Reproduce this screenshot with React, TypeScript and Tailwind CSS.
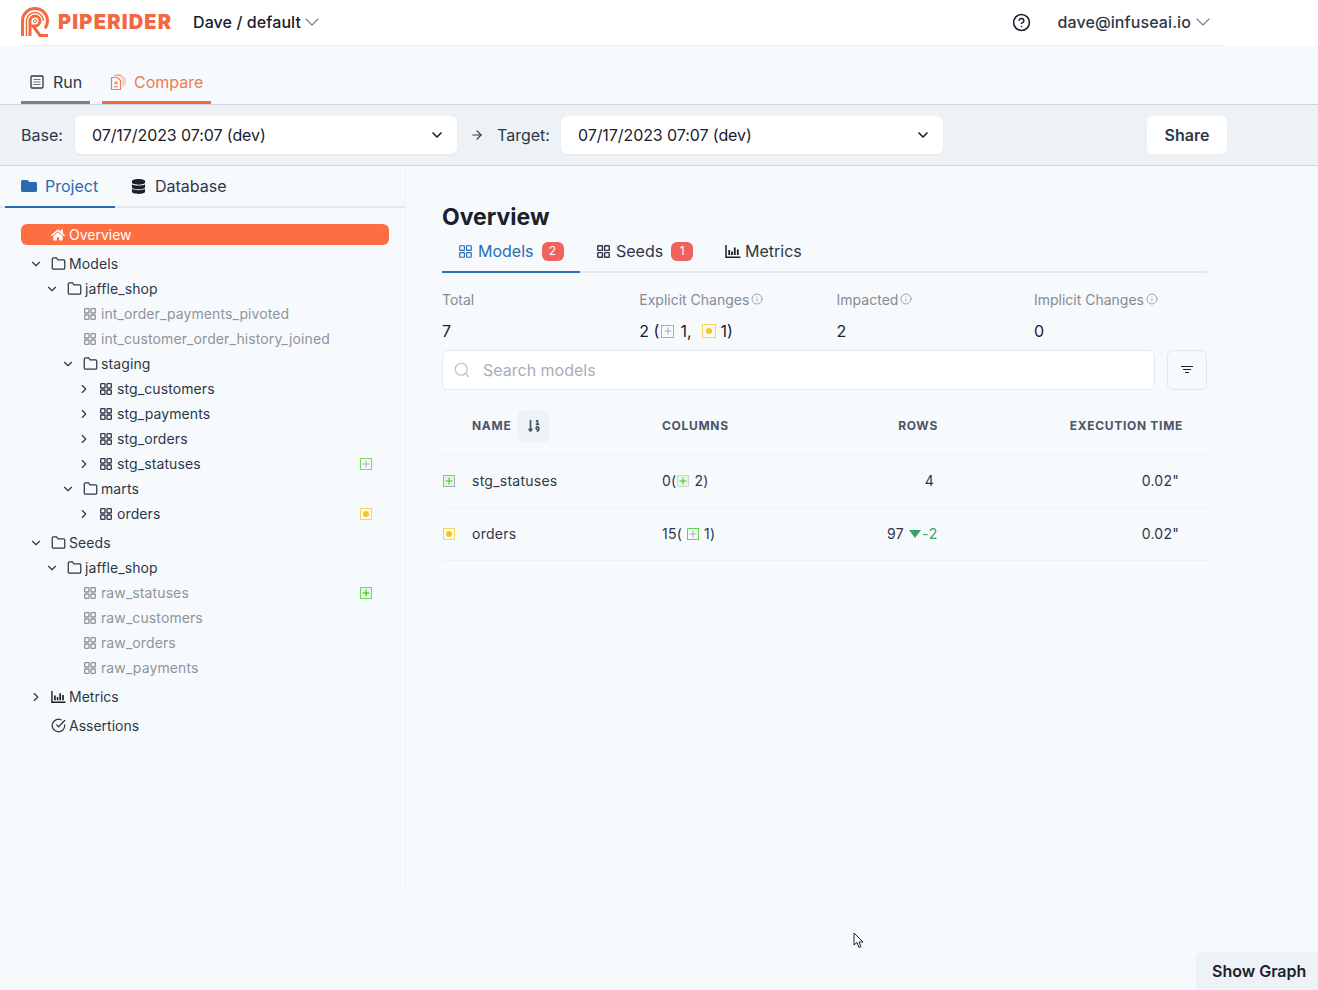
import { ChevronDown, ChevronRight, CircleHelp, Info, Search, ArrowRight } from "lucide-react";
import { FaDatabase, FaFolder, FaHome, FaSortNumericDown } from "react-icons/fa";
import { FiCheckCircle, FiFolder } from "react-icons/fi";

type Change = "added" | "changed";

function Logo() {
    return (
        <svg width="28" height="30" viewBox="0 0 28 30" fill="none" stroke="#f4683f" className="shrink-0">
            <path d="M1.500 29V14a12.500 12.500 0 0 1 25 0c0 3-1 5.500-2.500 7.500" strokeWidth="3" />
            <path d="M5.500 29V14a8.500 8.500 0 0 1 17 0" strokeWidth="1.500" />
            <path d="M9 29V14a5 5 0 1 1 5 5h-2l7 9.500h8" strokeWidth="3" />
            <circle cx="14" cy="14" r="1.500" strokeWidth="1" />
        </svg>
    );
}

function GridIcon({ size = 12, strokeWidth = 1.300 }: { size?: number; strokeWidth?: number }) {
    return (
        <svg width={size} height={size} viewBox="0 0 12 12" fill="none" stroke="currentColor" strokeWidth={strokeWidth} className="shrink-0">
            <rect x=".7" y=".7" width="4.300" height="4.300" rx=".5" />
            <rect x="7" y=".7" width="4.300" height="4.300" rx=".5" />
            <rect x=".7" y="7" width="4.300" height="4.300" rx=".5" />
            <rect x="7" y="7" width="4.300" height="4.300" rx=".5" />
        </svg>
    );
}

function FilterIcon() {
    return (
        <svg width="12" height="8" viewBox="0 0 12 8" stroke="#1a202c" strokeWidth="1" className="shrink-0">
            <path d="M0 .5h12M2 3.500h8M4 6.500h4" />
        </svg>
    );
}

function MetricsIcon({ size = 16 }: { size?: number }) {
    return (
        <svg width={size} height={size} viewBox="0 0 16 16" fill="none" stroke="currentColor" className="shrink-0">
            <path d="M1 2v12.200h14.500" strokeWidth="1.500" />
            <path d="M4.200 7v5M7 8.500V12M9.800 4.500V12M12.800 6.500V12" strokeWidth="1.800" />
        </svg>
    );
}

function RunIcon() {
    return (
        <svg width="14" height="14" viewBox="0 0 14 14" fill="none" stroke="currentColor" className="shrink-0">
            <rect x="1" y="1" width="12" height="12" rx="1" strokeWidth="1.300" />
            <path d="M3.500 4.500h7M3.500 7h7M3.500 9.500h7" strokeWidth="1" opacity="0.7" />
        </svg>
    );
}

function CompareIcon() {
    return (
        <svg width="16" height="17" viewBox="0 0 16 17" fill="none" stroke="currentColor" className="shrink-0">
            <path d="M4 1.500h6l3 3v8M6 .8h5l4 4v6" strokeWidth="1" opacity="0.6" />
            <path d="M1.500 3.500h6l3 3v9h-9z" strokeWidth="1.200" />
            <path d="M6 7v4M4 9h4M4 12.800h4" strokeWidth="1" />
        </svg>
    );
}

function ChangeIcon({
    type,
    border,
    mark,
    fill = "bg-transparent",
    size = "h-3 w-3",
}: {
    type: Change;
    border: string;
    mark?: string;
    fill?: string;
    size?: string;
}) {
    return (
        <span className={`inline-flex shrink-0 items-center justify-center border ${size} ${border} ${fill}`}>
            {type === "added" ? (
                <svg width="8" height="8" viewBox="0 0 8 8" stroke="currentColor" className={mark}>
                    <path d="M4 .5v7M.5 4h7" strokeWidth="1" />
                </svg>
            ) : (
                <span className="h-1.5 w-1.5 rounded-full bg-[#f4c430]" />
            )}
        </span>
    );
}

const yellowBox = { border: "border-[#f6d55c]", fill: "bg-[#fffbe6]" };

type TreeItem = {
    label: string;
    depth: number;
    kind: "folder" | "model" | "leaf";
    open?: boolean;
    change?: "green" | "greenSolid" | "yellow";
};

const modelsTree: TreeItem[] = [
    { label: "Models", depth: 0, kind: "folder", open: true },
    { label: "jaffle_shop", depth: 1, kind: "folder", open: true },
    { label: "int_order_payments_pivoted", depth: 2, kind: "leaf" },
    { label: "int_customer_order_history_joined", depth: 2, kind: "leaf" },
    { label: "staging", depth: 2, kind: "folder", open: true },
    { label: "stg_customers", depth: 3, kind: "model" },
    { label: "stg_payments", depth: 3, kind: "model" },
    { label: "stg_orders", depth: 3, kind: "model" },
    { label: "stg_statuses", depth: 3, kind: "model", change: "green" },
    { label: "marts", depth: 2, kind: "folder", open: true },
    { label: "orders", depth: 3, kind: "model", change: "yellow" },
];

const seedsTree: TreeItem[] = [
    { label: "Seeds", depth: 0, kind: "folder", open: true },
    { label: "jaffle_shop", depth: 1, kind: "folder", open: true },
    { label: "raw_statuses", depth: 2, kind: "leaf", change: "greenSolid" },
    { label: "raw_customers", depth: 2, kind: "leaf" },
    { label: "raw_orders", depth: 2, kind: "leaf" },
    { label: "raw_payments", depth: 2, kind: "leaf" },
];

const depthPadding = ["pl-[29px]", "pl-[45px]", "pl-[61px]", "pl-[77px]"];

function TreeRow({ item }: { item: TreeItem }) {
    const muted = item.kind === "leaf";
    return (
        <div
            className={`flex h-[25px] items-center pr-[33px] text-sm tracking-[0.1px] ${depthPadding[item.depth]} ${muted ? "text-[#8e949c]" : "text-[#2d3748]"}`}
        >
            <span className="flex w-[14px] shrink-0 justify-center">
                {item.kind === "folder" && <ChevronDown size={14} strokeWidth={2} />}
                {item.kind === "model" && <ChevronRight size={14} strokeWidth={2} />}
            </span>
            <span className="ml-[7px] flex w-4 shrink-0 justify-center">
                {item.kind === "folder" ? <FiFolder size={15} /> : <GridIcon />}
            </span>
            <span className="ml-[3px] flex-1 truncate">{item.label}</span>
            {item.change === "green" && <ChangeIcon type="added" border="border-[#6fdc58]" mark="text-[#a0aec0]" />}
            {item.change === "greenSolid" && (
                <ChangeIcon type="added" border="border-[#6fdc58]" mark="text-[#3fae2a]" fill="bg-[#e3f8de]" />
            )}
            {item.change === "yellow" && <ChangeIcon type="changed" {...yellowBox} />}
        </div>
    );
}

function Sidebar() {
    return (
        <aside className="flex h-[723px] w-[406px] shrink-0 flex-col border-r border-[#edf2f7]">
            <div className="flex h-[42px] border-b-2 border-[#e2e8f0] pl-[5px]">
                <div className="-mb-[2px] flex w-[110px] items-center gap-2 border-b-2 border-[#2b6cb0] pl-4 text-[#2b6cb0]">
                    <FaFolder size={16} />
                    <span>Project</span>
                </div>
                <div className="flex items-center gap-[9px] pl-4 text-[#1a202c]">
                    <FaDatabase size={15} />
                    <span className="text-[#2d3748]">Database</span>
                </div>
            </div>
            <div className="mt-4 px-[21px] pr-4">
                <div className="flex h-[21px] items-center rounded-md bg-[#ff6e42] pl-[30px] text-sm text-white">
                    <FaHome size={14} />
                    <span className="ml-[4px]">Overview</span>
                </div>
            </div>
            <div className="mt-[6px]">
                {modelsTree.map((item) => (
                    <TreeRow key={item.label + item.depth} item={item} />
                ))}
            </div>
            <div className="mt-1">
                {seedsTree.map((item) => (
                    <TreeRow key={item.label + item.depth} item={item} />
                ))}
            </div>
            <div className="mt-1 flex h-[25px] items-center pl-[29px] text-sm text-[#2d3748]">
                <span className="flex w-[14px] justify-center">
                    <ChevronRight size={14} strokeWidth={2} />
                </span>
                <span className="ml-[8px] flex w-[15px] justify-center text-[#1a202c]">
                    <MetricsIcon size={15} />
                </span>
                <span className="ml-[3px]">Metrics</span>
            </div>
            <div className="mt-1 flex h-[25px] items-center pl-[51px] text-sm text-[#2d3748]">
                <FiCheckCircle size={15} />
                <span className="ml-[3px]">Assertions</span>
            </div>
        </aside>
    );
}

function Stat({ label, info, children }: { label: string; info?: boolean; children: React.ReactNode }) {
    return (
        <div className="w-[197.3px] shrink-0">
            <div className="flex h-5 items-center text-sm text-[#858b94]">
                {label}
                {info && <Info size={12} strokeWidth={1.500} className="mb-[2px] ml-[2px]" />}
            </div>
            <div className="mt-[9px] flex h-6 items-center text-base text-[#1a202c]">{children}</div>
        </div>
    );
}

function Badge({ children }: { children: React.ReactNode }) {
    return (
        <span className="ml-2 flex h-[19px] w-[22px] items-center justify-center rounded-md bg-[#f0625c] text-xs text-white">
            {children}
        </span>
    );
}

const tableCols = "grid grid-cols-[220px_138px_138px_1fr] items-center";

function Overview() {
    return (
        <main className="flex w-[765px] flex-col pl-0 pt-[38px]">
            <h1 className="h-[26px] text-[23px] leading-[26px] font-bold text-[#1a202c]">Overview</h1>
            <div className="mt-[1px] flex h-[42px] border-b-2 border-[#e2e8f0]">
                <div className="-mb-[2px] flex w-[138px] items-center border-b-2 border-[#2b6cb0] pl-[17px] text-[#2b6cb0]">
                    <span className="mr-[6px]">
                        <GridIcon size={13} strokeWidth={1.100} />
                    </span>
                    Models
                    <Badge>2</Badge>
                </div>
                <div className="flex w-[129px] items-center pl-[17px] text-[#2d3748]">
                    <span className="mr-[6px]">
                        <GridIcon size={13} strokeWidth={1.300} />
                    </span>
                    Seeds
                    <Badge>1</Badge>
                </div>
                <div className="flex items-center pl-4 text-[#1a202c]">
                    <MetricsIcon />
                    <span className="ml-[4px] text-[#2d3748]">Metrics</span>
                </div>
            </div>
            <div className="mt-[17px] flex">
                <Stat label="Total">7</Stat>
                <Stat label="Explicit Changes" info>
                    2 (
                    <span className="ml-[2px] flex">
                        <ChangeIcon type="added" border="border-[#a0aec0]" mark="text-[#a0aec0]" size="h-[13px] w-[13px]" />
                    </span>
                    <span className="ml-[6px]">1,</span>
                    <span className="ml-[10px] mr-[5px] flex">
                        <ChangeIcon type="changed" size="h-[14px] w-[14px]" {...yellowBox} />
                    </span>
                    1)
                </Stat>
                <Stat label="Impacted" info>
                    2
                </Stat>
                <Stat label="Implicit Changes" info>
                    0
                </Stat>
            </div>
            <div className="mt-[7px] flex gap-3">
                <div className="flex h-10 flex-1 items-center rounded-md border border-[#e2e8f0] bg-white pl-[10px]">
                    <Search size={18} strokeWidth={1.500} className="text-[#b8bec7]" />
                    <span className="ml-[12px] text-base text-[#a8aeb8]">Search models</span>
                </div>
                <div className="flex h-10 w-10 items-center justify-center rounded-md border border-[#e2e8f0]">
                    <FilterIcon />
                </div>
            </div>
            <div className={`${tableCols} h-[65px] border-b border-[#edf2f7] pt-2 text-xs font-bold tracking-[0.7px] text-[#4a5568]`}>
                <div className="flex items-center pl-[30px]">
                    NAME
                    <span className="ml-[7px] flex h-8 w-8 items-center justify-center rounded-md bg-[#edf2f7]">
                        <FaSortNumericDown size={14} />
                    </span>
                </div>
                <div>COLUMNS</div>
                <div className="text-right">ROWS</div>
                <div className="pr-6 text-right">EXECUTION TIME</div>
            </div>
            <div className={`${tableCols} h-[53px] border-b border-[#edf2f7] text-sm tracking-[0.25px] text-[#2d3748]`}>
                <div className="flex items-center">
                    <span className="ml-[1px] flex w-[29px]">
                        <ChangeIcon type="added" border="border-[#a0aec0]" mark="text-[#3fc92a]" fill="bg-[#e3f8de]" />
                    </span>
                    stg_statuses
                </div>
                <div className="flex items-center">
                    0(
                    <span className="ml-[1px] flex">
                        <ChangeIcon type="added" border="border-[#cbd5e0]" mark="text-[#3fc92a]" fill="bg-[#e3f8de]" />
                    </span>
                    <span className="ml-[5px]">2)</span>
                </div>
                <div className="pr-1 text-right">4</div>
                <div className="pr-7 text-right">0.02"</div>
            </div>
            <div className={`${tableCols} h-[53px] border-b border-[#edf2f7] text-sm tracking-[0.25px] text-[#2d3748]`}>
                <div className="flex items-center">
                    <span className="ml-[1px] flex w-[29px]">
                        <ChangeIcon type="changed" border="border-[#f6d55c]" fill="bg-[#fffbe6]" />
                    </span>
                    orders
                </div>
                <div className="flex items-center">
                    15(
                    <span className="ml-[5px] flex">
                        <ChangeIcon type="added" border="border-[#5fd84a]" mark="text-[#a0aec0]" />
                    </span>
                    <span className="ml-[5px]">1)</span>
                </div>
                <div className="flex items-center justify-end">
                    97
                    <span className="ml-[5px] mr-[1px] h-0 w-0 border-x-[6px] border-t-[8px] border-x-transparent border-t-[#38a169]" />
                    <span className="tracking-[0.8px] text-[#38a169]">-2</span>
                </div>
                <div className="pr-7 text-right">0.02"</div>
            </div>
        </main>
    );
}

function VersionSelect() {
    return (
        <div className="flex h-[38px] w-[382px] items-center justify-between rounded-md bg-white pl-[17px] pr-[12px] text-base tracking-[-0.08px] text-[#1a202c] shadow-[0_1px_2px_rgba(0,0,0,0.05)]">
            07/17/2023 07:07 (dev)
            <ChevronDown size={16} strokeWidth={2.500} />
        </div>
    );
}

export default function App() {
    return (
        <div className="relative h-[990px] w-[1318px] overflow-hidden bg-[#f7fafc] font-['Inter',sans-serif] text-[#1a202c]">
            <div className="h-[46px] bg-white pl-[21px]">
                <header className="flex h-[46px] w-[1206px] items-center border-b border-[#edf2f7] pb-[1px]">
                    <Logo />
                    <span className="ml-[9px] w-[115px] text-[20px] font-black tracking-[1.2px] text-[#f4683f]">
                        PIPERIDER
                    </span>
                    <span className="ml-[20px] font-medium tracking-[0.1px] text-[#1a202c]">Dave / default</span>
                    <ChevronDown size={24} strokeWidth={1.100} className="-ml-[1px] text-[#718096]" />
                    <CircleHelp size={19} strokeWidth={2} className="ml-auto text-[#1a202c]" />
                    <span className="ml-[26px] font-medium tracking-[0.1px] text-[#2d3748]">dave@infuseai.io</span>
                    <ChevronDown size={24} strokeWidth={1.100} className="mr-[12px] text-[#718096]" />
                </header>
            </div>
            <nav className="flex h-[59px] gap-3 border-b border-[#cbd5e0] pl-[21px] pt-[20px]">
                <div className="flex h-[38px] w-[69px] items-center border-b-[3px] border-[#808080] pb-[3px] pl-[9px] text-[#2d3748]">
                    <RunIcon />
                    <span className="ml-[9px]">Run</span>
                </div>
                <div className="flex h-[38px] w-[109px] items-center border-b-[3px] border-[#f4683f] pb-[3px] pl-[8px] text-[#ee7a56]">
                    <CompareIcon />
                    <span className="ml-[8px]">Compare</span>
                </div>
            </nav>
            <div className="flex h-[61px] items-center border-b border-[#cbd5e0] bg-[#edf2f7] pl-[21px] text-[#2d3748]">
                <span className="w-[54px]">Base:</span>
                <VersionSelect />
                <ArrowRight size={14} strokeWidth={2} className="ml-[13px]" />
                <span className="ml-[13px] w-[64px]">Target:</span>
                <VersionSelect />
                <button className="ml-[204px] h-[38px] w-[80px] rounded-md bg-white font-semibold text-[#2d3748]">Share</button>
            </div>
            <div className="flex gap-9">
                <Sidebar />
                <Overview />
            </div>
            <button className="absolute right-0 bottom-0 flex h-[38px] w-[122px] items-center rounded-tl-md bg-[#edf2f7] pl-4 font-semibold text-[#1a202c]">
                Show Graph
            </button>
            <svg width="12" height="18" viewBox="0 0 12 18" className="absolute left-[853px] top-[932px]">
                <path d="M1 1v12l3-2.500 2 5 2-1-2-4.500h4z" fill="#fff" stroke="#222" strokeWidth="1" />
            </svg>
        </div>
    );
}
